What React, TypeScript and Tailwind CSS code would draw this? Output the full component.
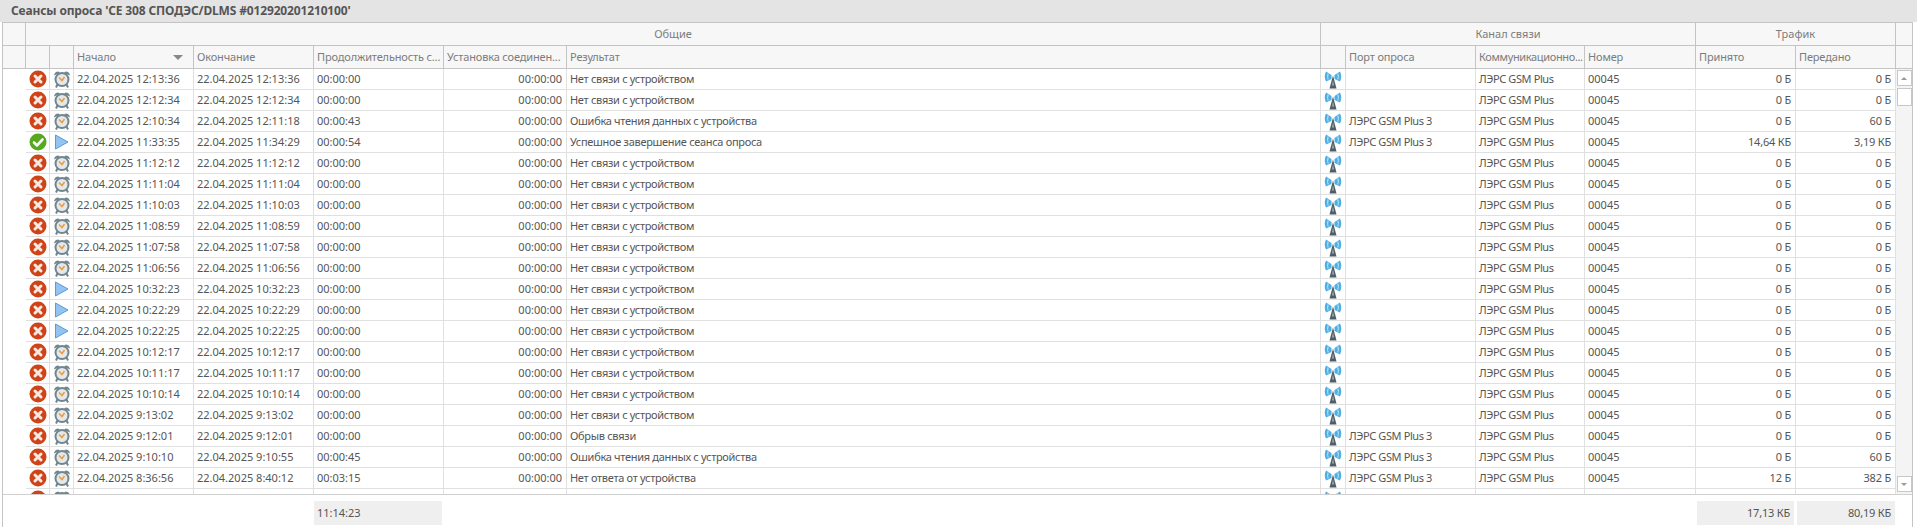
const FONT = "font-['Noto_Sans',sans-serif]";

type Row = {
  ok?: boolean;
  play?: boolean;
  start: string;
  end: string;
  dur: string;
  result: string;
  port?: boolean;
  rx: string;
  tx: string;
};

const NO_LINK = 'Нет связи с устройством';
const READ_ERR = 'Ошибка чтения данных с устройства';

const ROWS: Row[] = [
  { start: '22.04.2025 12:13:36', end: '22.04.2025 12:13:36', dur: '00:00:00', result: NO_LINK, rx: '0 Б', tx: '0 Б' },
  { start: '22.04.2025 12:12:34', end: '22.04.2025 12:12:34', dur: '00:00:00', result: NO_LINK, rx: '0 Б', tx: '0 Б' },
  { start: '22.04.2025 12:10:34', end: '22.04.2025 12:11:18', dur: '00:00:43', result: READ_ERR, port: true, rx: '0 Б', tx: '60 Б' },
  { ok: true, play: true, start: '22.04.2025 11:33:35', end: '22.04.2025 11:34:29', dur: '00:00:54', result: 'Успешное завершение сеанса опроса', port: true, rx: '14,64 КБ', tx: '3,19 КБ' },
  { start: '22.04.2025 11:12:12', end: '22.04.2025 11:12:12', dur: '00:00:00', result: NO_LINK, rx: '0 Б', tx: '0 Б' },
  { start: '22.04.2025 11:11:04', end: '22.04.2025 11:11:04', dur: '00:00:00', result: NO_LINK, rx: '0 Б', tx: '0 Б' },
  { start: '22.04.2025 11:10:03', end: '22.04.2025 11:10:03', dur: '00:00:00', result: NO_LINK, rx: '0 Б', tx: '0 Б' },
  { start: '22.04.2025 11:08:59', end: '22.04.2025 11:08:59', dur: '00:00:00', result: NO_LINK, rx: '0 Б', tx: '0 Б' },
  { start: '22.04.2025 11:07:58', end: '22.04.2025 11:07:58', dur: '00:00:00', result: NO_LINK, rx: '0 Б', tx: '0 Б' },
  { start: '22.04.2025 11:06:56', end: '22.04.2025 11:06:56', dur: '00:00:00', result: NO_LINK, rx: '0 Б', tx: '0 Б' },
  { play: true, start: '22.04.2025 10:32:23', end: '22.04.2025 10:32:23', dur: '00:00:00', result: NO_LINK, rx: '0 Б', tx: '0 Б' },
  { play: true, start: '22.04.2025 10:22:29', end: '22.04.2025 10:22:29', dur: '00:00:00', result: NO_LINK, rx: '0 Б', tx: '0 Б' },
  { play: true, start: '22.04.2025 10:22:25', end: '22.04.2025 10:22:25', dur: '00:00:00', result: NO_LINK, rx: '0 Б', tx: '0 Б' },
  { start: '22.04.2025 10:12:17', end: '22.04.2025 10:12:17', dur: '00:00:00', result: NO_LINK, rx: '0 Б', tx: '0 Б' },
  { start: '22.04.2025 10:11:17', end: '22.04.2025 10:11:17', dur: '00:00:00', result: NO_LINK, rx: '0 Б', tx: '0 Б' },
  { start: '22.04.2025 10:10:14', end: '22.04.2025 10:10:14', dur: '00:00:00', result: NO_LINK, rx: '0 Б', tx: '0 Б' },
  { start: '22.04.2025 9:13:02', end: '22.04.2025 9:13:02', dur: '00:00:00', result: NO_LINK, rx: '0 Б', tx: '0 Б' },
  { start: '22.04.2025 9:12:01', end: '22.04.2025 9:12:01', dur: '00:00:00', result: 'Обрыв связи', port: true, rx: '0 Б', tx: '0 Б' },
  { start: '22.04.2025 9:10:10', end: '22.04.2025 9:10:55', dur: '00:00:45', result: READ_ERR, port: true, rx: '0 Б', tx: '60 Б' },
  { start: '22.04.2025 8:36:56', end: '22.04.2025 8:40:12', dur: '00:03:15', result: 'Нет ответа от устройства', port: true, rx: '12 Б', tx: '382 Б' },
  { start: '', end: '', dur: '', result: '', rx: '', tx: '' },
];

function ErrorIcon() {
  return (
    <svg width="18" height="18" viewBox="0 0 18 18">
      <circle cx="9" cy="9" r="8.500" fill="#cf4318" />
      <path d="M6 6l6 6M12 6l-6 6" stroke="#f6e9e4" strokeWidth="3" strokeLinecap="round" />
    </svg>
  );
}

function OkIcon() {
  return (
    <svg width="18" height="18" viewBox="0 0 18 18">
      <circle cx="9" cy="9" r="8.500" fill="#57a81e" />
      <path d="M5 9.500l3 3 5.500-6" fill="none" stroke="#f3f8ee" strokeWidth="2.600" strokeLinecap="round" strokeLinejoin="round" />
    </svg>
  );
}

function AlarmIcon() {
  return (
    <svg width="18" height="18" viewBox="0 0 18 18">
      <path d="M1 5.500Q1.500 1.500 5.500 1.500L7 3zM17 5.500Q16.500 1.500 12.500 1.500L11 3z" fill="#70868f" />
      <path d="M4.500 14.500l-1.500 3M13.500 14.500l1.500 3" stroke="#70868f" strokeWidth="2" />
      <circle cx="9" cy="9.500" r="6.500" fill="#e4e8ea" stroke="#70868f" strokeWidth="2" />
      <path d="M6 7.500l3 3 2.500-3.500" fill="none" stroke="#ee9a3e" strokeWidth="1.500" />
    </svg>
  );
}

function PlayIcon() {
  return (
    <svg width="15" height="16" viewBox="0 0 15 16">
      <path d="M1.500 1l12.500 7-12.500 7z" fill="#93c4f0" stroke="#5b9ad9" strokeWidth="1" strokeLinejoin="round" />
    </svg>
  );
}

function AntennaIcon() {
  return (
    <svg width="18" height="19" viewBox="0 0 18 19">
      <path d="M7.500 5L2 1.500Q-0.500 6.500 2 11.500L7.500 9z" fill="#4fafe3" />
      <path d="M10.500 5L16 1.500Q18.500 6.500 16 11.500L10.500 9z" fill="#4fafe3" />
      <path d="M4.200 3.500Q3 6.500 4.200 9.500M13.800 3.500Q15 6.500 13.800 9.500" fill="none" stroke="#bfe6f8" strokeWidth="1.100" />
      <path d="M9 5.500L5.500 18.500h7z" fill="#4f5e66" />
      <path d="M9 10l-1 5.500h2z" fill="#a3aeb4" />
    </svg>
  );
}

const cell = 'h-full flex items-center shrink-0 border-r border-[#e0e0e0] overflow-hidden whitespace-nowrap';
const head = 'h-full flex items-center shrink-0 border-r border-[#c4c4c4] overflow-hidden whitespace-nowrap pl-[3px] pr-1 text-[#7c7c7c] tracking-[-0.15px]';

export default function App() {
  return (
    <div className={`${FONT} w-[1917px] h-[527px] bg-white text-[11px] text-[#555] flex flex-col overflow-hidden`}>
      <div className="h-[22px] shrink-0 bg-[#e4e4e4] flex items-center pl-[11px] font-bold text-[12px] text-[#555] tracking-[-0.15px]">
        Сеансы опроса 'CE 308 СПОДЭС/DLMS #012920201210100'
      </div>

      <div className="flex-1 min-h-0 mx-[2px] mr-[4px] border-x border-[#c4c4c4] flex flex-col">
        {/* band row */}
        <div className="h-[24px] shrink-0 flex bg-[#f7f7f7] border-y border-[#c4c4c4] text-[#7c7c7c]">
          <div className="w-[23px] h-full shrink-0 border-r border-[#c4c4c4]" />
          <div className="w-[1295px] h-full shrink-0 border-r border-[#c4c4c4] flex items-center justify-center">Общие</div>
          <div className="w-[375px] h-full shrink-0 border-r border-[#c4c4c4] flex items-center justify-center">Канал связи</div>
          <div className="w-[200px] h-full shrink-0 border-r border-[#c4c4c4] flex items-center justify-center">Трафик</div>
          <div className="flex-1" />
        </div>

        {/* column headers */}
        <div className="h-[23px] shrink-0 flex bg-[#f7f7f7] border-b border-[#c4c4c4]">
          <div className="w-[23px] h-full shrink-0 border-r border-[#c4c4c4]" />
          <div className="w-[24px] h-full shrink-0 border-r border-[#c4c4c4]" />
          <div className="w-[24px] h-full shrink-0 border-r border-[#c4c4c4]" />
          <div className={`${head} w-[120px] justify-between pr-[10px]`}>
            Начало
            <span className="w-0 h-0 border-x-[5px] border-t-[5px] border-x-transparent border-t-[#888]" />
          </div>
          <div className={`${head} w-[120px]`}>Окончание</div>
          <div className={`${head} w-[130px]`}>Продолжительность с...</div>
          <div className={`${head} w-[123px]`}>Установка соединен...</div>
          <div className={`${head} w-[754px]`}>Результат</div>
          <div className="w-[25px] h-full shrink-0 border-r border-[#c4c4c4]" />
          <div className={`${head} w-[130px]`}>Порт опроса</div>
          <div className={`${head} w-[109px] tracking-[-0.35px]`}>Коммуникационно...</div>
          <div className={`${head} w-[111px]`}>Номер</div>
          <div className={`${head} w-[100px]`}>Принято</div>
          <div className={`${head} w-[100px]`}>Передано</div>
          <div className="flex-1" />
        </div>

        {/* rows */}
        <div className="flex-1 min-h-0 flex overflow-hidden">
          <div className="w-[23px] shrink-0" />
          <div className="w-[1870px] shrink-0">
            {ROWS.map((r, i) => (
              <div key={i} className="h-[21px] flex border-b border-[#e0e0e0]">
                <div className={`${cell} w-[24px] justify-center`}>{r.ok ? <OkIcon /> : <ErrorIcon />}</div>
                <div className={`${cell} w-[24px] justify-center`}>{r.play ? <PlayIcon /> : <AlarmIcon />}</div>
                <div className={`${cell} w-[120px] pl-[3px]`}>{r.start}</div>
                <div className={`${cell} w-[120px] pl-[3px]`}>{r.end}</div>
                <div className={`${cell} w-[130px] pl-[3px]`}>{r.dur}</div>
                <div className={`${cell} w-[123px] px-1 justify-end`}>{r.dur && '00:00:00'}</div>
                <div className={`${cell} w-[754px] pl-[3px] tracking-[-0.3px]`}>{r.result}</div>
                <div className={`${cell} w-[25px] justify-center`}><AntennaIcon /></div>
                <div className={`${cell} w-[130px] pl-[3px] tracking-[-0.4px]`}>{r.port && 'ЛЭРС GSM Plus 3'}</div>
                <div className={`${cell} w-[109px] pl-[3px] tracking-[-0.4px]`}>{r.start && 'ЛЭРС GSM Plus'}</div>
                <div className={`${cell} w-[111px] pl-[3px]`}>{r.start && '00045'}</div>
                <div className={`${cell} w-[100px] px-1 justify-end tracking-[-0.2px]`}>{r.rx}</div>
                <div className={`${cell} w-[100px] px-1 justify-end tracking-[-0.2px]`}>{r.tx}</div>
              </div>
            ))}
          </div>
          {/* scrollbar */}
          <div className="flex-1 flex flex-col items-center pt-[1px] pb-[2px] bg-[#f4f4f4]">
            <div className="w-[15px] h-[16px] border border-[#c8c8c8] bg-white flex items-center justify-center">
              <span className="w-0 h-0 border-x-[3px] border-b-[3px] border-x-transparent border-b-[#999]" />
            </div>
            <div className="w-[15px] h-[18px] mt-[2px] border border-[#c8c8c8] bg-white" />
            <div className="flex-1" />
            <div className="w-[15px] h-[16px] border border-[#c8c8c8] bg-white flex items-center justify-center">
              <span className="w-0 h-0 border-x-[3px] border-t-[3px] border-x-transparent border-t-[#999]" />
            </div>
          </div>
        </div>

        {/* totals */}
        <div className="h-[33px] shrink-0 border-t border-[#d0d0d0] flex items-start pt-[6px] bg-white">
          <div className="w-[311px] shrink-0" />
          <div className="w-[128px] h-[24px] shrink-0 bg-[#efefef] flex items-center pl-[3px]">11:14:23</div>
          <div className="w-[1255px] shrink-0" />
          <div className="w-[97px] h-[24px] shrink-0 bg-[#efefef] flex items-center justify-end px-1 tracking-[-0.2px]">17,13 КБ</div>
          <div className="w-[3px] shrink-0" />
          <div className="w-[98px] h-[24px] shrink-0 bg-[#efefef] flex items-center justify-end px-1 tracking-[-0.2px]">80,19 КБ</div>
        </div>
      </div>
    </div>
  );
}
